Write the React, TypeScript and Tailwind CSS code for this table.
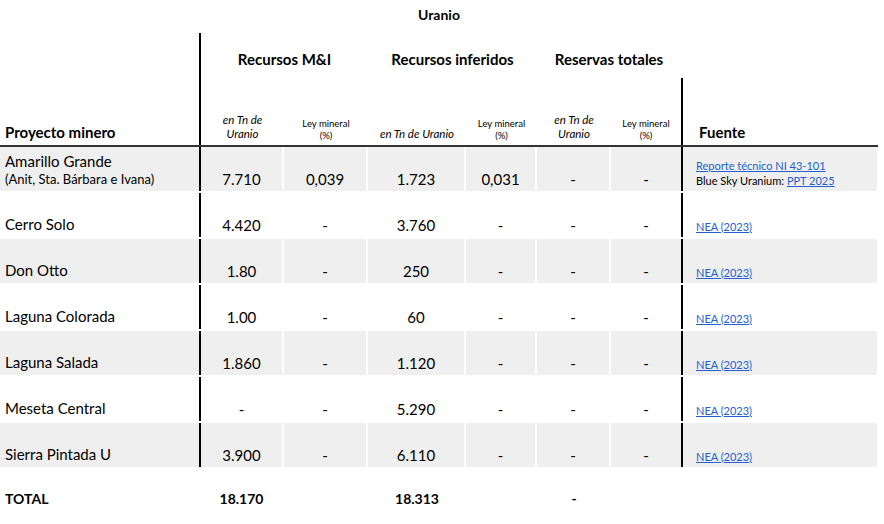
type Source = { text?: string; href?: string };

type Project = {
  name: string;
  sub?: string;
  miTn: string;
  miLey: string;
  infTn: string;
  infLey: string;
  resTn: string;
  resLey: string;
  sources: Source[][];
};

const PROJECTS: Project[] = [
  {
    name: "Amarillo Grande",
    sub: "(Anit, Sta. Bárbara e Ivana)",
    miTn: "7.710", miLey: "0,039", infTn: "1.723", infLey: "0,031", resTn: "-", resLey: "-",
    sources: [
      [{ href: "Reporte técnico NI 43-101" }],
      [{ text: "Blue Sky Uranium: " }, { href: "PPT 2025" }],
    ],
  },
  { name: "Cerro Solo", miTn: "4.420", miLey: "-", infTn: "3.760", infLey: "-", resTn: "-", resLey: "-", sources: [[{ href: "NEA (2023)" }]] },
  { name: "Don Otto", miTn: "1.80", miLey: "-", infTn: "250", infLey: "-", resTn: "-", resLey: "-", sources: [[{ href: "NEA (2023)" }]] },
  { name: "Laguna Colorada", miTn: "1.00", miLey: "-", infTn: "60", infLey: "-", resTn: "-", resLey: "-", sources: [[{ href: "NEA (2023)" }]] },
  { name: "Laguna Salada", miTn: "1.860", miLey: "-", infTn: "1.120", infLey: "-", resTn: "-", resLey: "-", sources: [[{ href: "NEA (2023)" }]] },
  { name: "Meseta Central", miTn: "-", miLey: "-", infTn: "5.290", infLey: "-", resTn: "-", resLey: "-", sources: [[{ href: "NEA (2023)" }]] },
  { name: "Sierra Pintada U", miTn: "3.900", miLey: "-", infTn: "6.110", infLey: "-", resTn: "-", resLey: "-", sources: [[{ href: "NEA (2023)" }]] },
];

const COLS = "grid grid-cols-[199px_85px_84px_98px_71px_74px_70px_197px]";

function TnHead({ oneLine }: { oneLine?: boolean }) {
  return (
    <div className="italic text-[11.5px] leading-[14px] text-center">
      {oneLine ? "en Tn de Uranio" : (<>en Tn de<br />Uranio</>)}
    </div>
  );
}

function LeyHead() {
  return (
    <div className="text-[9.5px] leading-[12px] text-center">
      Ley mineral<br />(%)
    </div>
  );
}

function Num({ value, className = "" }: { value: string; className?: string }) {
  return (
    <div className={`flex items-end justify-center pb-[2px] text-[15px] leading-[20px] ${className}`}>
      {value}
    </div>
  );
}

function ProjectRow({ p, gray }: { p: Project; gray: boolean }) {
  const bg = gray ? "bg-[#efefef]" : "bg-white";
  return (
    <div className={`${COLS} h-[44px] mb-[2px]`}>
      <div className={`${bg} flex flex-col justify-end pl-[5px] pb-[3px]`}>
        {p.sub ? (
          <>
            <div className="text-[15px] leading-[19px]">{p.name}</div>
            <div className="text-[13px] leading-[17px]">{p.sub}</div>
          </>
        ) : (
          <div className="text-[15px] leading-[20px]">{p.name}</div>
        )}
      </div>
      <Num value={p.miTn} className={`${bg} border-l-2 border-l-black border-r-2 border-r-white`} />
      <Num value={p.miLey} className={`${bg} border-r-2 border-r-white`} />
      <Num value={p.infTn} className={`${bg} border-r-2 border-r-white`} />
      <Num value={p.infLey} className={`${bg} border-r-2 border-r-white`} />
      <Num value={p.resTn} className={`${bg} border-r-2 border-r-white`} />
      <Num value={p.resLey} className={bg} />
      <div className="border-l-2 border-black pr-px bg-white">
        <div className={`${bg} h-full flex flex-col justify-end pl-[13px] pb-[3px] text-[11px] leading-[15px]`}>
          {p.sources.map((line, i) => (
            <div key={i}>
              {line.map((s, j) =>
                s.href ? (
                  <a key={j} href="#" className="text-[#2260d0] underline">{s.href}</a>
                ) : (
                  <span key={j}>{s.text}</span>
                )
              )}
            </div>
          ))}
        </div>
      </div>
    </div>
  );
}

export default function App() {
  return (
    <div className="w-[884px] h-[524px] bg-white text-black overflow-hidden" style={{ fontFamily: "Lato, 'Open Sans', sans-serif" }}>
      <div className="w-[878px]">
        <div className="h-[33px] pt-[5px] text-center font-bold text-[14px] leading-[20px]">Uranio</div>

        <div className={`${COLS} grid-rows-[45px_67px] border-b-2 border-[#333]`}>
          <div className="row-span-2 flex items-end pl-[5px] pb-[3px] font-bold text-[15px] leading-[20px]">
            Proyecto minero
          </div>
          <div className="col-span-2 border-l-2 border-black flex items-end justify-center pb-[9px] font-bold text-[15px] leading-[20px]">
            Recursos M&amp;I
          </div>
          <div className="col-span-2 flex items-end justify-center pb-[9px] font-bold text-[15px] leading-[20px]">
            Recursos inferidos
          </div>
          <div className="col-span-2 flex items-end justify-center pb-[9px] font-bold text-[15px] leading-[20px]">
            Reservas totales
          </div>
          <div />

          <div className="border-l-2 border-black flex items-end justify-center pb-[4px]"><TnHead /></div>
          <div className="flex items-end justify-center pb-[3px]"><LeyHead /></div>
          <div className="flex items-end justify-center pb-[4px]"><TnHead oneLine /></div>
          <div className="flex items-end justify-center pb-[3px]"><LeyHead /></div>
          <div className="flex items-end justify-center pb-[4px]"><TnHead /></div>
          <div className="flex items-end justify-center pb-[3px]"><LeyHead /></div>
          <div className="border-l-2 border-black flex items-end pl-[16px] pb-[3px] font-bold text-[15px] leading-[20px]">
            Fuente
          </div>
        </div>

        {PROJECTS.map((p, i) => (
          <ProjectRow key={p.name} p={p} gray={i % 2 === 0} />
        ))}

        <div className={`${COLS} h-[55px] font-bold text-[14px] leading-[20px]`}>
          <div className="flex items-end pl-[5px] pb-[15px]">TOTAL</div>
          <div className="flex items-end justify-center pb-[15px]">18.170</div>
          <div />
          <div className="flex items-end justify-center pb-[15px]">18.313</div>
          <div />
          <div className="flex items-end justify-center pb-[15px]">-</div>
          <div />
          <div />
        </div>
      </div>
    </div>
  );
}
